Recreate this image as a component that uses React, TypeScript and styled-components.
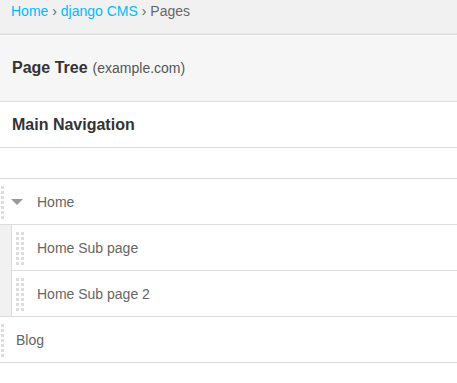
import React from "react";
import styled, { createGlobalStyle } from "styled-components";

const GlobalStyle = createGlobalStyle`
  html, body {
    margin: 0;
    padding: 0;
    background: #fff;
  }
  body {
    font-family: "Liberation Sans", Arial, Helvetica, sans-serif;
    color: #666;
  }
  ul {
    list-style: none;
    margin: 0;
    padding: 0;
  }
`;

const Breadcrumbs = styled.nav`
  height: 35px;
  box-sizing: border-box;
  padding: 3px 0 0 11px;
  font-size: 14px;
  line-height: 16px;
  color: #666;
  background: linear-gradient(
    to bottom,
    #f1f1f1 0,
    #f1f1f1 33px,
    #e6e6e6 33px,
    #dddddd 35px
  );
`;

const Crumb = styled.a`
  color: #00bbff;
  text-decoration: none;
`;

const Sep = styled.span`
  color: #666;
`;

const Header = styled.header`
  height: 67px;
  box-sizing: border-box;
  display: flex;
  align-items: center;
  padding: 0 12px;
  background: #f6f6f6;
  border-bottom: 1px solid #dddddd;
`;

const Title = styled.h1`
  margin: 0;
  font-size: 16px;
  font-weight: bold;
  color: #333;
`;

const Site = styled.span`
  margin-left: 5px;
  font-size: 14px;
  font-weight: normal;
  color: #555;
`;

const Section = styled.div`
  height: 46px;
  box-sizing: border-box;
  display: flex;
  align-items: center;
  padding: 0 12px;
  border-bottom: 1px solid #dddddd;
  font-size: 16px;
  font-weight: bold;
  color: #333;
`;

const Tree = styled.ul`
  margin-top: 30px;
  border-top: 1px solid #dddddd;
`;

const TreeItem = styled.li`
  border-bottom: 1px solid #dddddd;
`;

const Row = styled.div<{ $pad: number }>`
  height: 45px;
  box-sizing: border-box;
  display: flex;
  align-items: center;
  padding-left: ${(p) => p.$pad}px;
  font-size: 14px;
  color: #666;
  background: #fff;
`;

const Handle = styled.span`
  align-self: flex-start;
  margin-top: 7px;
  display: flex;
  gap: 2px;
`;

const DotColumn = styled.span`
  width: 3px;
  height: 33px;
  background: repeating-linear-gradient(
    to bottom,
    #dddddd 0,
    #dddddd 3px,
    transparent 3px,
    transparent 5px
  );
`;

const Toggle = styled.span`
  width: 0;
  height: 0;
  margin: 0 14px 0 7px;
  border-left: 6px solid transparent;
  border-right: 6px solid transparent;
  border-top: 6px solid #999;
`;

const Label = styled.span<{ $gap: number }>`
  margin-left: ${(p) => p.$gap}px;
`;

const SubList = styled.ul`
  border-top: 1px solid #dddddd;
  padding-left: 11px;
  background: #f1f1f1;
`;

const SubItem = styled.li`
  border-left: 1px solid #dddddd;
  & + & {
    border-top: 1px solid #dddddd;
  }
`;

const DragHandle: React.FC<{ cols: number }> = ({ cols }) => (
  <Handle>
    {Array.from({ length: cols }).map((_, i) => (
      <DotColumn key={i} />
    ))}
  </Handle>
);

const subPages = ["Home Sub page", "Home Sub page 2"];

export default function App() {
  return (
    <>
      <GlobalStyle />
      <Breadcrumbs>
        <Crumb href="#">Home</Crumb> <Sep>›</Sep> <Crumb href="#">django CMS</Crumb>{" "}
        <Sep>›</Sep> Pages
      </Breadcrumbs>
      <Header>
        <Title>
          Page Tree<Site>(example.com)</Site>
        </Title>
      </Header>
      <Section>Main Navigation</Section>
      <Tree>
        <TreeItem>
          <Row $pad={1}>
            <DragHandle cols={1} />
            <Toggle />
            <Label $gap={0}>Home</Label>
          </Row>
          <SubList>
            {subPages.map((name) => (
              <SubItem key={name}>
                <Row $pad={4}>
                  <DragHandle cols={2} />
                  <Label $gap={13}>{name}</Label>
                </Row>
              </SubItem>
            ))}
          </SubList>
        </TreeItem>
        <TreeItem>
          <Row $pad={1}>
            <DragHandle cols={1} />
            <Label $gap={12}>Blog</Label>
          </Row>
        </TreeItem>
      </Tree>
    </>
  );
}
